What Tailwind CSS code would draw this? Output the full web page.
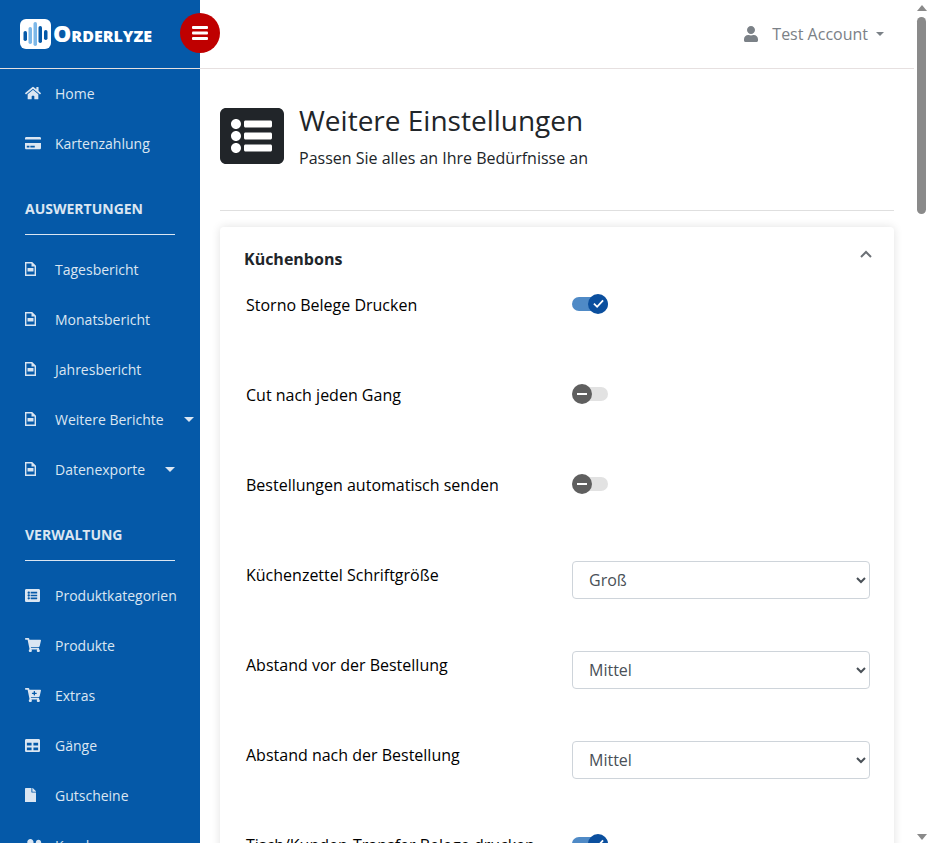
<!DOCTYPE html>
<html lang="de">
<head>
  <meta charset="UTF-8">
  <title>Orderlyze - Weitere Einstellungen</title>
  <script src="https://cdn.jsdelivr.net/npm/@tailwindcss/browser@4"></script>
</head>
<body class="h-[843px] overflow-hidden bg-white font-['Open_Sans',sans-serif] text-[16px] text-[#212529]">
  <div class="flex h-[843px] overflow-hidden">

    <!-- sidebar -->
    <aside class="w-[200px] shrink-0 bg-[#0559a8] text-[#dbe6f2]">
      <div class="flex h-[69px] items-center border-b border-[#e6e0e0] pl-5 pb-[1px]">
        <svg class="h-[30px] w-[31px] shrink-0" viewBox="0 0 31 30">
          <rect width="31" height="30" rx="6" fill="#fff"/>
          <rect x="3.5" y="12" width="3.5" height="10" rx="1.7" fill="#0559a8"/>
          <rect x="8.5" y="8" width="3.5" height="17" rx="1.7" fill="#7db8e8"/>
          <rect x="13.5" y="3" width="3.5" height="24" rx="1.7" fill="#7db8e8"/>
          <rect x="18.5" y="7" width="3.5" height="17" rx="1.7" fill="#0559a8"/>
          <rect x="24" y="11" width="3.5" height="10" rx="1.7" fill="#0559a8"/>
        </svg>
        <span class="ml-[2px] text-[23px] leading-none font-extrabold text-white [font-variant:small-caps]">Orderlyze</span>
      </div>

      <nav>
        <a class="flex h-[50px] items-center pb-[2px] pl-[25px]">
          <svg class="mr-[14px] w-4 shrink-0" viewBox="0 0 576 512" fill="currentColor"><path d="M280.37 148.26L96 300.11V464a16 16 0 0 0 16 16l112.06-.29a16 16 0 0 0 15.92-16V368a16 16 0 0 1 16-16h64a16 16 0 0 1 16 16v95.64a16 16 0 0 0 16 16.05L464 480a16 16 0 0 0 16-16V300L295.67 148.26a12.19 12.19 0 0 0-15.3 0zM571.6 251.47L488 182.56V44.05a12 12 0 0 0-12-12h-56a12 12 0 0 0-12 12v72.61L318.47 43a48 48 0 0 0-61 0L4.34 251.47a12 12 0 0 0-1.6 16.9l25.5 31A12 12 0 0 0 45.15 301l235.22-193.74a12.19 12.19 0 0 1 15.3 0L530.9 301a12 12 0 0 0 16.9-1.6l25.5-31a12 12 0 0 0-1.7-16.93z"/></svg>
          <span class="text-[14px]">Home</span>
        </a>
        <a class="flex h-[50px] items-center pb-[2px] pl-[25px]">
          <svg class="mr-[14px] w-4 shrink-0" viewBox="0 0 576 512" fill="currentColor"><path d="M0 432c0 26.5 21.5 48 48 48h480c26.5 0 48-21.5 48-48V256H0v176zm192-68c0-6.6 5.4-12 12-12h136c6.6 0 12 5.4 12 12v40c0 6.6-5.4 12-12 12H204c-6.6 0-12-5.4-12-12v-40zm-128 0c0-6.6 5.4-12 12-12h72c6.6 0 12 5.4 12 12v40c0 6.6-5.4 12-12 12H76c-6.6 0-12-5.4-12-12v-40zM576 80v48H0V80c0-26.5 21.5-48 48-48h480c26.5 0 48 21.5 48 48z"/></svg>
          <span class="text-[14px]">Kartenzahlung</span>
        </a>

        <div class="mx-[25px] mt-[25px] mb-[10px] h-[41px] border-b border-[#dbe6f2] pt-[5px] text-[14px] leading-[20px] font-bold">AUSWERTUNGEN</div>

        <a class="flex h-[50px] items-center pb-[2px] pl-[25px]">
          <svg class="mr-[19px] h-[14px] w-[11px] shrink-0" viewBox="0 0 11 14"><path d="M.7.7h6.2l3.4 3.4v9.2H.7z" fill="none" stroke="currentColor" stroke-width="1.4"/><path d="M6.5.5v4h4z" fill="currentColor"/><rect x="2.5" y="6" width="6" height="3.5" fill="currentColor"/></svg>
          <span class="text-[14px]">Tagesbericht</span>
        </a>
        <a class="flex h-[50px] items-center pb-[2px] pl-[25px]">
          <svg class="mr-[19px] h-[14px] w-[11px] shrink-0" viewBox="0 0 11 14"><path d="M.7.7h6.2l3.4 3.4v9.2H.7z" fill="none" stroke="currentColor" stroke-width="1.4"/><path d="M6.5.5v4h4z" fill="currentColor"/><rect x="2.5" y="6" width="6" height="3.5" fill="currentColor"/></svg>
          <span class="text-[14px]">Monatsbericht</span>
        </a>
        <a class="flex h-[50px] items-center pb-[2px] pl-[25px]">
          <svg class="mr-[19px] h-[14px] w-[11px] shrink-0" viewBox="0 0 11 14"><path d="M.7.7h6.2l3.4 3.4v9.2H.7z" fill="none" stroke="currentColor" stroke-width="1.4"/><path d="M6.5.5v4h4z" fill="currentColor"/><rect x="2.5" y="6" width="6" height="3.5" fill="currentColor"/></svg>
          <span class="text-[14px]">Jahresbericht</span>
        </a>
        <a class="flex h-[50px] items-center pb-[2px] pl-[25px]">
          <svg class="mr-[19px] h-[14px] w-[11px] shrink-0" viewBox="0 0 11 14"><path d="M.7.7h6.2l3.4 3.4v9.2H.7z" fill="none" stroke="currentColor" stroke-width="1.4"/><path d="M6.5.5v4h4z" fill="currentColor"/><rect x="2.5" y="6" width="6" height="3.5" fill="currentColor"/></svg>
          <span class="text-[14px]">Weitere Berichte</span>
          <span class="mt-[1px] ml-[20px] h-0 w-0 border-x-[5px] border-t-[5px] border-x-transparent border-t-[#dbe6f2]"></span>
        </a>
        <a class="flex h-[50px] items-center pb-[2px] pl-[25px]">
          <svg class="mr-[19px] h-[14px] w-[11px] shrink-0" viewBox="0 0 11 14"><path d="M.7.7h6.2l3.4 3.4v9.2H.7z" fill="none" stroke="currentColor" stroke-width="1.4"/><path d="M6.5.5v4h4z" fill="currentColor"/><rect x="2.5" y="6" width="6" height="3.5" fill="currentColor"/></svg>
          <span class="text-[14px]">Datenexporte</span>
          <span class="mt-[1px] ml-[20px] h-0 w-0 border-x-[5px] border-t-[5px] border-x-transparent border-t-[#dbe6f2]"></span>
        </a>

        <div class="mx-[25px] mt-[25px] mb-[10px] h-[41px] border-b border-[#dbe6f2] pt-[5px] text-[14px] leading-[20px] font-bold">VERWALTUNG</div>

        <a class="flex h-[50px] items-center pb-[2px] pl-[25px]">
          <svg class="mr-[15px] w-[15px] shrink-0" viewBox="0 0 512 512" fill="currentColor"><path d="M464 480H48c-26.51 0-48-21.49-48-48V80c0-26.51 21.49-48 48-48h416c26.51 0 48 21.49 48 48v352c0 26.51-21.49 48-48 48zM128 120c-22.091 0-40 17.909-40 40s17.909 40 40 40 40-17.909 40-40-17.909-40-40-40zm0 96c-22.091 0-40 17.909-40 40s17.909 40 40 40 40-17.909 40-40-17.909-40-40-40zm0 96c-22.091 0-40 17.909-40 40s17.909 40 40 40 40-17.909 40-40-17.909-40-40-40zm288-136v-32c0-6.627-5.373-12-12-12H204c-6.627 0-12 5.373-12 12v32c0 6.627 5.373 12 12 12h200c6.627 0 12-5.373 12-12zm0 96v-32c0-6.627-5.373-12-12-12H204c-6.627 0-12 5.373-12 12v32c0 6.627 5.373 12 12 12h200c6.627 0 12-5.373 12-12zm0 96v-32c0-6.627-5.373-12-12-12H204c-6.627 0-12 5.373-12 12v32c0 6.627 5.373 12 12 12h200c6.627 0 12-5.373 12-12z"/></svg>
          <span class="text-[14px]">Produktkategorien</span>
        </a>
        <a class="flex h-[50px] items-center pb-[2px] pl-[25px]">
          <svg class="mr-[14px] w-4 shrink-0" viewBox="0 0 576 512" fill="currentColor"><path d="M528.12 301.319l47.273-208C578.806 78.301 567.391 64 551.99 64H159.208l-9.166-44.81C147.758 8.021 137.93 0 126.529 0H24C10.745 0 0 10.745 0 24v16c0 13.255 10.745 24 24 24h69.883l70.248 343.435C147.325 417.1 136 435.222 136 456c0 30.928 25.072 56 56 56s56-25.072 56-56c0-15.674-6.447-29.835-16.824-40h209.647C430.447 426.165 424 440.326 424 456c0 30.928 25.072 56 56 56s56-25.072 56-56c0-22.172-12.888-41.332-31.579-50.405l5.517-24.276c3.413-15.018-8.002-29.319-23.403-29.319H218.117l-6.545-32h293.145c11.206 0 20.92-7.754 23.403-18.681z"/></svg>
          <span class="text-[14px]">Produkte</span>
        </a>
        <a class="flex h-[50px] items-center pb-[2px] pl-[25px]">
          <svg class="mr-[14px] w-4 shrink-0" viewBox="0 0 576 512" fill="currentColor"><path d="M504.717 320H211.572l6.545 32h268.418c15.401 0 26.816 14.301 23.403 29.319l-5.517 24.276C523.112 414.668 536 433.828 536 456c0 31.202-25.519 56.444-56.824 55.994-29.823-.429-54.35-24.631-55.155-54.447-.44-16.287 6.085-31.049 16.803-41.548H231.176C241.553 426.165 248 440.326 248 456c0 31.813-26.528 57.431-58.67 55.938-28.54-1.325-51.751-24.385-53.251-52.917-1.158-22.034 10.436-41.455 28.051-51.586L93.883 64H24C10.745 64 0 53.255 0 40V24C0 10.745 10.745 0 24 0h102.529c11.401 0 21.228 8.021 23.513 19.19L159.208 64H551.99c15.401 0 26.816 14.301 23.403 29.319l-47.273 208C525.637 312.246 515.923 320 504.717 320zM408 168h-48v-40c0-8.837-7.163-16-16-16h-16c-8.837 0-16 7.163-16 16v40h-48c-8.837 0-16 7.163-16 16v16c0 8.837 7.163 16 16 16h48v40c0 8.837 7.163 16 16 16h16c8.837 0 16-7.163 16-16v-40h48c8.837 0 16-7.163 16-16v-16c0-8.837-7.163-16-16-16z"/></svg>
          <span class="text-[14px]">Extras</span>
        </a>
        <a class="flex h-[50px] items-center pb-[2px] pl-[25px]">
          <svg class="mr-[15px] w-[15px] shrink-0" viewBox="0 0 512 512" fill="currentColor"><path d="M464 32H48C21.49 32 0 53.49 0 80v352c0 26.51 21.49 48 48 48h416c26.51 0 48-21.49 48-48V80c0-26.51-21.49-48-48-48zM224 416H64v-96h160v96zm0-160H64v-96h160v96zm224 160H288v-96h160v96zm0-160H288v-96h160v96z"/></svg>
          <span class="text-[14px]">Gänge</span>
        </a>
        <a class="flex h-[50px] items-center pb-[2px] pl-[25px]">
          <svg class="mr-[19px] w-[11px] shrink-0" viewBox="0 0 384 512" fill="currentColor"><path d="M224 136V0H24C10.7 0 0 10.7 0 24v464c0 13.3 10.7 24 24 24h336c13.3 0 24-10.7 24-24V160H248c-13.2 0-24-10.8-24-24zm160-14.1v6.1H256V0h6.1c6.4 0 12.5 2.5 17 7l97.9 98c4.5 4.5 7 10.6 7 16.9z"/></svg>
          <span class="text-[14px]">Gutscheine</span>
        </a>
        <a class="flex h-[50px] items-center pb-[2px] pl-[25px]">
          <svg class="mr-[12px] w-[18px] shrink-0" viewBox="0 0 640 512" fill="currentColor"><path d="M192 256c61.9 0 112-50.1 112-112S253.9 32 192 32 80 82.1 80 144s50.1 112 112 112zm76.8 32h-8.3c-20.8 10-43.9 16-68.5 16s-47.6-6-68.5-16h-8.3C51.6 288 0 339.6 0 403.2V432c0 26.5 21.5 48 48 48h288c26.5 0 48-21.5 48-48v-28.8c0-63.6-51.6-115.2-115.2-115.2zM480 256c53 0 96-43 96-96s-43-96-96-96-96 43-96 96 43 96 96 96zm48 32h-3.8c-13.9 4.8-28.6 8-44.2 8s-30.3-3.2-44.2-8H432c-20.4 0-39.2 5.9-55.7 15.4 24.4 26.3 39.7 61.2 39.7 99.8v38.4c0 2.2-.5 4.3-.6 6.4H592c26.5 0 48-21.5 48-48 0-61.9-50.1-112-112-112z"/></svg>
          <span class="text-[14px]">Kunden</span>
        </a>
      </nav>
    </aside>

    <!-- main -->
    <main class="relative min-w-0 flex-1">
      <header class="flex h-[69px] items-center justify-end border-b border-[#e6e0e0] pr-[30px] pb-[1px] text-[#7b8187]">
        <button class="absolute top-[13px] left-[-20px] flex h-10 w-10 items-center justify-center rounded-full bg-[#bf0000] text-white">
          <svg class="w-4" viewBox="0 0 16 14" fill="currentColor"><rect width="16" height="3" rx="1"/><rect y="5.5" width="16" height="3" rx="1"/><rect y="11" width="16" height="3" rx="1"/></svg>
        </button>
        <svg class="mr-[14px] w-[14px]" viewBox="0 0 448 512" fill="currentColor"><path d="M224 256c70.7 0 128-57.3 128-128S294.7 0 224 0 96 57.3 96 128s57.3 128 128 128zm89.6 32h-16.7c-22.2 10.2-46.9 16-72.9 16s-50.6-5.8-72.9-16h-16.7C60.2 288 0 348.2 0 422.4V464c0 26.5 21.5 48 48 48h352c26.5 0 48-21.5 48-48v-41.6c0-74.2-60.2-134.4-134.4-134.4z"/></svg>
        <span class="text-[16px]">Test Account</span>
        <span class="ml-2 h-0 w-0 border-x-[4px] border-t-[4px] border-x-transparent border-t-[#7b8187]"></span>
      </header>

      <div class="px-5">
        <div class="flex h-[142px] items-start border-b border-[#dfdfdf] pt-[39px]">
          <svg class="w-16 shrink-0 text-[#212529]" viewBox="0 32 512 448" fill="currentColor"><path d="M464 480H48c-26.51 0-48-21.49-48-48V80c0-26.51 21.49-48 48-48h416c26.51 0 48 21.49 48 48v352c0 26.51-21.49 48-48 48zM128 120c-22.091 0-40 17.909-40 40s17.909 40 40 40 40-17.909 40-40-17.909-40-40-40zm0 96c-22.091 0-40 17.909-40 40s17.909 40 40 40 40-17.909 40-40-17.909-40-40-40zm0 96c-22.091 0-40 17.909-40 40s17.909 40 40 40 40-17.909 40-40-17.909-40-40-40zm288-136v-32c0-6.627-5.373-12-12-12H204c-6.627 0-12 5.373-12 12v32c0 6.627 5.373 12 12 12h200c6.627 0 12-5.373 12-12zm0 96v-32c0-6.627-5.373-12-12-12H204c-6.627 0-12 5.373-12 12v32c0 6.627 5.373 12 12 12h200c6.627 0 12-5.373 12-12zm0 96v-32c0-6.627-5.373-12-12-12H204c-6.627 0-12 5.373-12 12v32c0 6.627 5.373 12 12 12h200c6.627 0 12-5.373 12-12z"/></svg>
          <div class="ml-[15px]">
            <h1 class="-mt-[5px] text-[28px] leading-[34px]">Weitere Einstellungen</h1>
            <p class="mt-[10px] text-[16px] leading-[22px]">Passen Sie alles an Ihre Bedürfnisse an</p>
          </div>
        </div>

        <section class="relative mt-4 rounded-[4px] bg-white pr-6 pl-6 shadow-[0_0_10px_rgba(0,0,0,0.12)]">
          <div class="flex h-[62px] items-center pt-[1px] text-[16px] font-bold">
            Küchenbons
            <svg class="absolute top-[23px] right-[22px] w-3 text-[#6b7075]" viewBox="0 0 12 8" fill="none" stroke="currentColor" stroke-width="2"><path d="M1 7l5-5 5 5"/></svg>
          </div>

          <div class="pl-[2px]">
            <div class="flex h-[90px] items-start">
              <label class="w-[326px] leading-[32px] text-black">Storno Belege Drucken</label>
              <div class="relative mt-2 h-[14px] w-9 rounded-full bg-[#4f8ac6]">
                <span class="absolute top-[-3px] right-0 flex h-5 w-5 items-center justify-center rounded-full bg-[#0b4f9e] text-white">
                  <svg class="w-[11px]" viewBox="0 0 12 10" fill="none" stroke="currentColor" stroke-width="2"><path d="M1 5l3.5 3.5L11 1.5"/></svg>
                </span>
              </div>
            </div>
            <div class="flex h-[90px] items-start">
              <label class="w-[326px] leading-[32px] text-black">Cut nach jeden Gang</label>
              <div class="relative mt-2 h-[14px] w-9 rounded-full bg-[#e2e2e2]">
                <span class="absolute top-[-3px] left-0 flex h-5 w-5 items-center justify-center rounded-full bg-[#5f5f5f]"><span class="h-[2px] w-[10px] bg-white"></span></span>
              </div>
            </div>
            <div class="flex h-[90px] items-start">
              <label class="w-[326px] leading-[32px] text-black">Bestellungen automatisch senden</label>
              <div class="relative mt-2 h-[14px] w-9 rounded-full bg-[#e2e2e2]">
                <span class="absolute top-[-3px] left-0 flex h-5 w-5 items-center justify-center rounded-full bg-[#5f5f5f]"><span class="h-[2px] w-[10px] bg-white"></span></span>
              </div>
            </div>
            <div class="flex h-[90px] items-start">
              <label class="w-[326px] leading-[32px] text-black">Küchenzettel Schriftgröße</label>
              <select class="mt-[2px] h-[38px] w-[298px] rounded-[4px] border border-[#ced4da] bg-white pl-3 text-[16px] text-[#495057]"><option>Groß</option></select>
            </div>
            <div class="flex h-[90px] items-start">
              <label class="w-[326px] leading-[32px] text-black">Abstand vor der Bestellung</label>
              <select class="mt-[2px] h-[38px] w-[298px] rounded-[4px] border border-[#ced4da] bg-white pl-3 text-[16px] text-[#495057]"><option>Mittel</option></select>
            </div>
            <div class="flex h-[90px] items-start">
              <label class="w-[326px] leading-[32px] text-black">Abstand nach der Bestellung</label>
              <select class="mt-[2px] h-[38px] w-[298px] rounded-[4px] border border-[#ced4da] bg-white pl-3 text-[16px] text-[#495057]"><option>Mittel</option></select>
            </div>
            <div class="flex h-[90px] items-start">
              <label class="w-[326px] leading-[32px] text-black">Tisch/Kunden-Transfer Belege drucken</label>
              <div class="relative mt-2 h-[14px] w-9 rounded-full bg-[#4f8ac6]">
                <span class="absolute top-[-3px] right-0 flex h-5 w-5 items-center justify-center rounded-full bg-[#0b4f9e] text-white">
                  <svg class="w-[11px]" viewBox="0 0 12 10" fill="none" stroke="currentColor" stroke-width="2"><path d="M1 5l3.5 3.5L11 1.5"/></svg>
                </span>
              </div>
            </div>
          </div>
        </section>
      </div>
    </main>

    <!-- scrollbar -->
    <div class="flex w-[15px] shrink-0 flex-col items-center bg-white">
      <span class="mt-[5px] h-0 w-0 border-x-[5px] border-b-[6px] border-x-transparent border-b-[#8a8a8a]"></span>
      <span class="mt-[6px] h-[197px] w-[9px] rounded-full bg-[#8a8a8a]"></span>
      <span class="mt-auto mb-[3px] h-0 w-0 border-x-[5px] border-t-[6px] border-x-transparent border-t-[#8a8a8a]"></span>
    </div>
  </div>
</body>
</html>
